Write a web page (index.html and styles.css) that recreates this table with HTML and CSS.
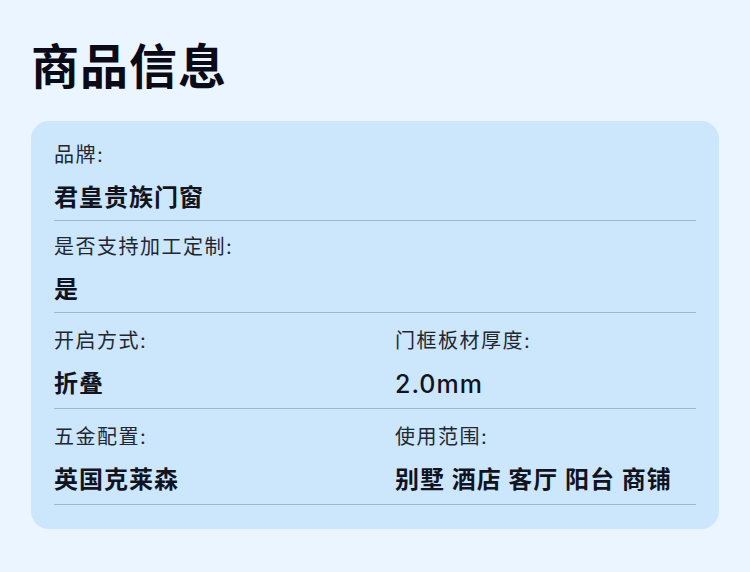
FILE: index.html
```html
<!DOCTYPE html>
<html lang="zh-CN">
<head>
<meta charset="utf-8">
<title>商品信息</title>
<link rel="stylesheet" href="styles.css">
</head>
<body>
<main class="page">
  <h1 class="title">商品信息</h1>
  <section class="card">
    <div class="row">
      <div class="item">
        <div class="label">品牌:</div>
        <div class="value">君皇贵族门窗</div>
      </div>
    </div>
    <div class="row">
      <div class="item">
        <div class="label">是否支持加工定制:</div>
        <div class="value">是</div>
      </div>
    </div>
    <div class="row two">
      <div class="item">
        <div class="label">开启方式:</div>
        <div class="value">折叠</div>
      </div>
      <div class="item">
        <div class="label">门框板材厚度:</div>
        <div class="value num">2.0mm</div>
      </div>
    </div>
    <div class="row two">
      <div class="item">
        <div class="label">五金配置:</div>
        <div class="value">英国克莱森</div>
      </div>
      <div class="item">
        <div class="label">使用范围:</div>
        <div class="value">别墅 酒店 客厅 阳台 商铺</div>
      </div>
    </div>
  </section>
</main>
</body>
</html>
```
FILE: styles.css
```css
html, body {
  margin: 0;
  padding: 0;
  background: #eaf5ff;
}
body {
  width: 750px;
  height: 572px;
  overflow: hidden;
  font-family: Inter, "Noto Sans CJK SC", sans-serif;
}
.page {
  padding: 38px 31px 0;
}
.title {
  margin: 0 0 25px;
  font-size: 48px;
  line-height: 58px;
  font-weight: 700;
  letter-spacing: 1px;
  color: #0b0b18;
}
.card {
  background: #cce6fc;
  border-radius: 18px;
  padding: 8px 23px 24px;
}
.row {
  display: grid;
  grid-template-columns: 1fr;
  padding: 13px 0 6px;
  border-bottom: 1px solid #9fb8d0;
}
.row.two {
  grid-template-columns: 1fr 1fr;
  column-gap: 40px;
  padding: 15px 0 8px;
}
.item {
  display: flex;
  flex-direction: column;
  gap: 14px;
}
.label {
  font-size: 20px;
  line-height: 26px;
  letter-spacing: 1.5px;
  color: #222631;
  font-weight: 400;
}
.value {
  font-size: 24px;
  line-height: 32px;
  letter-spacing: 1px;
  font-weight: 700;
  color: #111420;
  white-space: nowrap;
}
.value.num {
  font-weight: 500;
  font-size: 25px;
}
```
